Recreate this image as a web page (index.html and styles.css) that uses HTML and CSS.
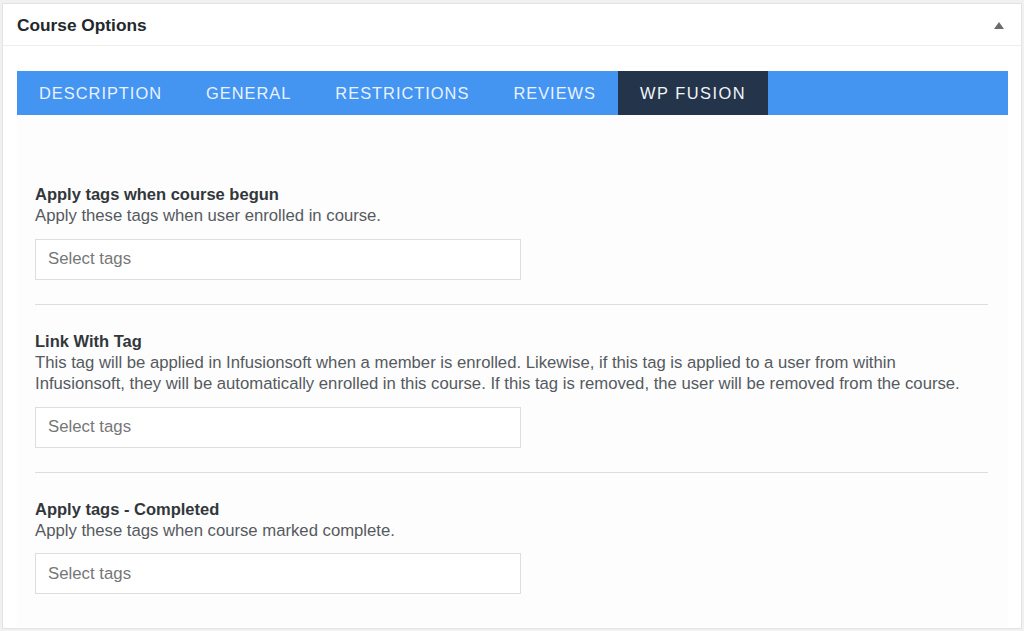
FILE: index.html
```html
<!DOCTYPE html>
<html lang="en">

<head>
    <meta charset="UTF-8">
    <meta name="viewport" content="width=device-width, initial-scale=1.0">
    <title>Course Options</title>
    <link rel="stylesheet" href="styles.css">
</head>

<body>
    <div class="postbox">
        <div class="postbox-header">
            <h2>Course Options</h2>
            <button class="toggle" aria-label="Toggle panel"><span class="arrow"></span></button>
        </div>
        <div class="inside">
            <ul class="tabs">
                <li>Description</li>
                <li>General</li>
                <li>Restrictions</li>
                <li>Reviews</li>
                <li class="active">WP Fusion</li>
            </ul>
            <div class="panel">
                <div class="field">
                    <label>Apply tags when course begun</label>
                    <p>Apply these tags when user enrolled in course.</p>
                    <input type="text" placeholder="Select tags">
                </div>
                <div class="field">
                    <label>Link With Tag</label>
                    <p>This tag will be applied in Infusionsoft when a member is enrolled. Likewise, if this tag is applied to a user from within Infusionsoft, they will be automatically enrolled in this course. If this tag is removed, the user will be removed from the course.</p>
                    <input type="text" placeholder="Select tags">
                </div>
                <div class="field last">
                    <label>Apply tags - Completed</label>
                    <p>Apply these tags when course marked complete.</p>
                    <input type="text" placeholder="Select tags">
                </div>
            </div>
        </div>
    </div>
</body>

</html>
```

FILE: styles.css
```css
body {
    margin: 0;
    background-color: #f1f1f1;
    font-family: "Liberation Sans", Arial, sans-serif;
    color: #23282d;
}

.postbox {
    margin: 3px 2px 2px 2px;
    height: 626px;
    box-sizing: border-box;
    background-color: #fff;
    border: 1px solid #e3e3e3;
}

.postbox-header {
    display: flex;
    align-items: center;
    justify-content: space-between;
    height: 42px;
    padding: 2px 12px 0 14px;
    box-sizing: border-box;
    border-bottom: 1px solid #eeeeee;
}

.postbox-header h2 {
    margin: 0;
    font-size: 17.3px;
    font-weight: bold;
    color: #23282d;
}

.toggle {
    width: 20px;
    height: 20px;
    padding: 0;
    border: none;
    background: none;
    display: flex;
    align-items: center;
    justify-content: center;
}

.arrow {
    width: 0;
    height: 0;
    border-left: 5px solid transparent;
    border-right: 5px solid transparent;
    border-bottom: 7px solid #6c6c6c;
}

.inside {
    padding: 25px 13px 0 14px;
}

.tabs {
    display: flex;
    margin: 0;
    padding: 0;
    list-style: none;
    height: 44px;
    background-color: #4494f2;
}

.tabs li {
    display: flex;
    align-items: center;
    padding: 0 22px;
    font-size: 16.4px;
    letter-spacing: 1px;
    text-transform: uppercase;
    color: #e9f2ff;
}

.tabs li.active {
    background-color: #24354b;
    color: #f2f4f7;
    letter-spacing: 1.5px;
}

.panel {
    padding: 43px 20px 0 18px;
    background-color: #fdfdfd;
    height: 512px;
    box-sizing: border-box;
}

.field {
    padding: 25px 0 24px 0;
    border-bottom: 1px solid #dddddd;
}

.field.last {
    border-bottom: none;
}

.field label {
    display: block;
    font-size: 16.5px;
    font-weight: bold;
    line-height: 22px;
    color: #32373c;
}

.field p {
    margin: 0 0 12px 0;
    font-size: 16.7px;
    line-height: 21.5px;
    color: #555a60;
}

.field input {
    display: block;
    width: 486px;
    height: 41px;
    box-sizing: border-box;
    padding: 0 12px;
    border: 1px solid #dedede;
    background-color: #fff;
    font-family: "Liberation Sans", Arial, sans-serif;
    font-size: 16.8px;
    color: #32373c;
}

.field input::placeholder {
    color: #777;
}
```
